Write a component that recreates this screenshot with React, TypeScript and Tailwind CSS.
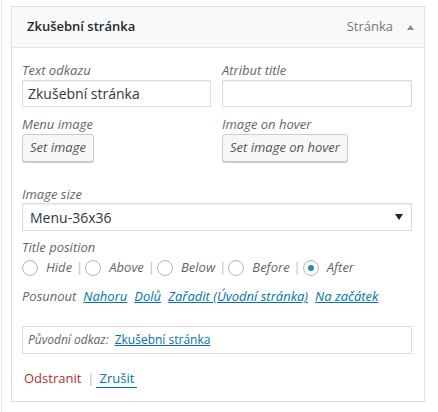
import React from 'react';

const font = { fontFamily: '"Open Sans", "Liberation Sans", sans-serif' };

const Radio = ({ checked }: { checked?: boolean }) => (
    <span className="w-[16px] h-[16px] rounded-full border border-[#b4b9be] bg-white shadow-[inset_0_1px_2px_rgba(0,0,0,0.07)] flex items-center justify-center shrink-0">
        {checked && <span className="w-[6px] h-[6px] rounded-full bg-[#1e8cbe]" />}
    </span>
);

const Sep = () => <span className="text-[#cdb9a6] not-italic ml-[4px] mr-[2px]">|</span>;

const options = ['Hide', 'Above', 'Below', 'Before', 'After'];

const App = () => {
    return (
        <div className="w-[438px] h-[412px] bg-white overflow-hidden" style={font}>
            <div className="ml-px h-full border-l border-[#e5e5e5] pl-[9px] pt-[6px]">
                <div className="w-[414px] border border-[#dfdfdf] bg-white">
                    {/* header */}
                    <div className="h-[41px] bg-[#f9f9f9] border-b border-[#e5e5e5] flex items-center pl-[15px] pr-[10px]">
                        <span className="text-[13px] font-semibold text-[#23282d]">Zkušební stránka</span>
                        <span className="ml-auto text-[13px] text-[#72777c]">Stránka</span>
                        <svg width="7" height="5" viewBox="0 0 7 5" className="ml-[14px]">
                            <polygon points="3.5,0 7,5 0,5" fill="#8c8f94" />
                        </svg>
                    </div>

                    {/* body */}
                    <div className="pl-[10px] pr-[12px] pt-[13px] pb-[14px] text-[13px]">
                        <div className="flex gap-[11px]">
                            <div className="w-[189px]">
                                <div className="italic text-[#666] leading-[18px]">Text odkazu</div>
                                <div className="mt-px h-[27px] border border-[#ddd] shadow-[inset_0_1px_2px_rgba(0,0,0,0.07)] flex items-center px-[5px] text-[14px] text-[#32373c]">
                                    Zkušební stránka
                                </div>
                            </div>
                            <div className="w-[190px]">
                                <div className="italic text-[#666] leading-[18px]">Atribut title</div>
                                <div className="mt-px h-[27px] border border-[#ddd] shadow-[inset_0_1px_2px_rgba(0,0,0,0.07)]" />
                            </div>
                        </div>

                        <div className="flex gap-[11px] mt-[8px]">
                            <div className="w-[189px]">
                                <div className="italic text-[#666] leading-[18px]">Menu image</div>
                                <button className="mt-px h-[28px] px-[7px] border border-[#ccc] rounded-[3px] bg-[#f7f7f7] shadow-[0_1px_0_#ccc] italic text-[#555] text-[13px]">
                                    Set image
                                </button>
                            </div>
                            <div className="w-[190px]">
                                <div className="italic text-[#666] leading-[18px]">Image on hover</div>
                                <button className="mt-px h-[28px] px-[7px] border border-[#ccc] rounded-[3px] bg-[#f7f7f7] shadow-[0_1px_0_#ccc] italic text-[#555] text-[13px]">
                                    Set image on hover
                                </button>
                            </div>
                        </div>

                        <div className="mt-[23px] italic text-[#666] leading-[18px]">Image size</div>
                        <div className="h-[28px] w-[390px] border border-[#ddd] shadow-[inset_0_1px_2px_rgba(0,0,0,0.07)] flex items-center pl-[7px] pr-[8px] text-[14px] text-[#32373c]">
                            Menu-36x36
                            <svg width="8" height="6" viewBox="0 0 8 6" className="ml-auto">
                                <polygon points="0,0 8,0 4,6" fill="#222" />
                            </svg>
                        </div>

                        <div className="mt-[7px] italic text-[#666] leading-[18px]">Title position</div>
                        <div className="mt-[2px] h-[20px] flex items-center italic text-[#666]">
                            {options.map((o, i) => (
                                <React.Fragment key={o}>
                                    <Radio checked={o === 'After'} />
                                    <span className="ml-[8px]">{o}</span>
                                    {i < options.length - 1 && <Sep />}
                                </React.Fragment>
                            ))}
                        </div>

                        <div className="mt-[9px] h-[18px] flex items-center gap-[7px] italic leading-[18px]">
                            <span className="text-[#666]">Posunout</span>
                            <a href="#" className="text-[#0073aa] underline">Nahoru</a>
                            <a href="#" className="text-[#0073aa] underline">Dolů</a>
                            <a href="#" className="text-[#0073aa] underline">Zařadit (Úvodní stránka)</a>
                            <a href="#" className="text-[#0073aa] underline">Na začátek</a>
                        </div>

                        <div className="mt-[21px] h-[28px] w-[390px] border border-[#dcdcdc] flex items-center pl-[5px] text-[12px]">
                            <span className="italic text-[#666]">Původní odkaz:</span>
                            <a href="#" className="ml-[6px] text-[#0073aa] underline">Zkušební stránka</a>
                        </div>

                        <div className="mt-[15px] h-[18px] flex items-center text-[13px] leading-[18px] pl-[2px]">
                            <a href="#" className="text-[#b32d2e]">Odstranit</a>
                            <span className="ml-[6px] mr-[2px] text-[#cdb9a6]">|</span>
                            <a href="#" className="text-[#0073aa] border-b border-[#0073aa] px-[3px]">Zrušit</a>
                        </div>
                    </div>
                </div>
            </div>
        </div>
    );
};

export default App;
